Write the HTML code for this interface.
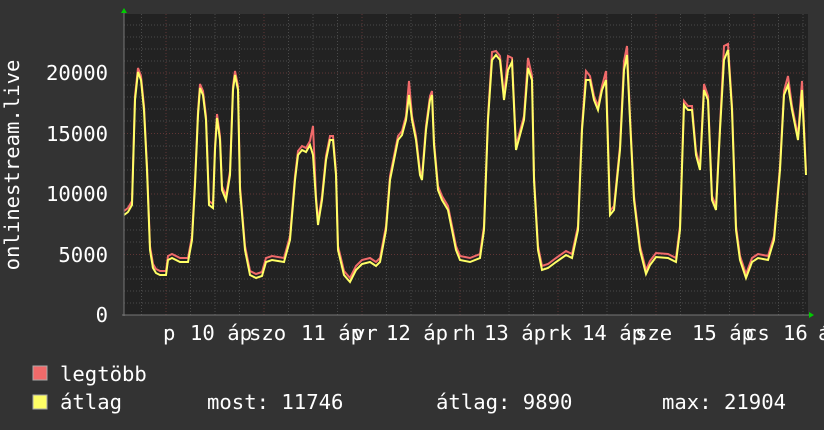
<!DOCTYPE html>
<html><head><meta charset="utf-8"><style>
body{margin:0;background:#333;}
svg{display:block;font-family:"DejaVu Sans Mono","Liberation Mono",monospace;}
</style></head><body>
<svg width="824" height="430" xmlns="http://www.w3.org/2000/svg">
<rect width="824" height="430" fill="#333"/>
<rect x="124" y="14" width="684" height="301" fill="#222"/>
<g stroke="#4a4a4a" stroke-width="1" stroke-dasharray="1,2">
<path d="M124 303H808M124 291H808M124 279H808M124 267H808M124 242H808M124 230H808M124 218H808M124 206H808M124 182H808M124 170H808M124 158H808M124 146H808M124 121H808M124 109H808M124 97H808M124 85H808M124 61H808M124 49H808M124 37H808M124 25H808"/>
<path d="M141.5 14V315M190.5 14V315M215 14V315M239.5 14V315M288.5 14V315M313 14V315M337.5 14V315M386.5 14V315M411 14V315M435.5 14V315M484.5 14V315M509 14V315M533.5 14V315M582.5 14V315M607 14V315M631.5 14V315M680.5 14V315M705 14V315M729.5 14V315M778.5 14V315M803 14V315"/>
</g>
<g stroke="#603535" stroke-width="1" stroke-dasharray="1,2">
<path d="M124 254.5H808M124 194H808M124 133.5H808M124 73H808"/>
<path d="M166 14V315M264 14V315M362 14V315M460 14V315M558 14V315M656 14V315M754 14V315"/>
</g>
<polyline fill="none" stroke="#f06a6a" stroke-width="2" transform="translate(0,-4)" points="124,215 128,212 132,205 135,100 138,72 141,80 144,110 147,170 150,250 153,268 156,273 160,275 166,275 168,260 172,258 180,262 188,262 192,240 195,185 198,115 200,88 203,95 206,120 209,205 213,208 215,150 217,118 220,140 222,190 226,200 230,175 233,90 235,75 238,90 240,190 245,250 250,275 256,278 262,276 266,262 272,260 284,262 290,240 295,180 298,155 302,150 306,152 310,145 313,130 316,200 318,225 322,200 326,160 330,140 333,140 336,175 338,250 344,275 350,282 356,270 362,264 370,262 376,266 380,262 386,230 390,180 394,160 398,140 402,135 406,120 409,85 412,120 416,140 420,175 422,180 426,130 430,100 432,95 434,145 438,190 442,200 448,210 452,230 456,250 460,260 470,262 480,258 484,230 488,120 492,56 496,55 500,60 504,100 508,60 512,62 516,150 520,135 524,120 528,62 532,80 534,180 538,250 542,270 548,268 556,262 566,255 572,258 578,230 582,130 586,75 590,80 594,100 598,110 602,90 606,75 610,215 614,210 620,150 624,65 627,50 630,120 634,200 640,250 646,274 650,265 656,257 668,258 676,262 680,230 684,105 688,110 692,110 696,155 700,170 704,88 708,100 712,200 716,210 720,130 724,50 728,48 732,110 736,230 740,260 746,278 752,262 758,258 768,260 774,240 780,170 784,95 788,80 792,110 798,140 802,85 806,175"/>
<polyline fill="none" stroke="#ffff66" stroke-width="2" points="124,215 128,212 132,205 135,100 138,72 141,80 144,110 147,170 150,250 153,268 156,273 160,275 166,275 168,260 172,258 180,262 188,262 192,240 195,185 198,115 200,88 203,95 206,120 209,205 213,208 215,150 217,118 220,140 222,190 226,200 230,175 233,90 235,75 238,90 240,190 245,250 250,275 256,278 262,276 266,262 272,260 284,262 290,240 295,180 298,155 302,150 306,152 310,145 313,155 316,200 318,225 322,200 326,160 330,140 333,140 336,175 338,250 344,275 350,282 356,270 362,264 370,262 376,266 380,262 386,230 390,180 394,160 398,140 402,135 406,120 409,95 412,120 416,140 420,175 422,180 426,130 430,100 432,95 434,145 438,190 442,200 448,210 452,230 456,250 460,260 470,262 480,258 484,230 488,120 492,60 496,55 500,60 504,100 508,70 512,62 516,150 520,135 524,120 528,68 532,80 534,180 538,250 542,270 548,268 556,262 566,255 572,258 578,230 582,130 586,80 590,80 594,100 598,110 602,90 606,80 610,215 614,210 620,150 624,70 627,55 630,120 634,200 640,250 646,274 650,265 656,257 668,258 676,262 680,230 684,105 688,110 692,110 696,155 700,170 704,90 708,100 712,200 716,210 720,130 724,60 728,50 732,110 736,230 740,260 746,278 752,262 758,258 768,260 774,240 780,170 784,95 788,85 792,110 798,140 802,90 806,175"/>
<path d="M124 12V316M122 315H810" stroke="#777" stroke-width="1"/>
<path d="M121 13L124 8L127 13Z" fill="#0c0"/>
<path d="M809 312L814 315L809 318Z" fill="#0c0"/>
<g fill="#fff" font-size="20.6" text-anchor="end">
<text x="108" y="80">20000</text>
<text x="108" y="141">15000</text>
<text x="108" y="201">10000</text>
<text x="108" y="262">5000</text>
<text x="108" y="322">0</text>
</g>
<text transform="translate(19,165) rotate(-90)" fill="#fff" font-size="20.6" text-anchor="middle">onlinestream.live</text>
<g fill="#fff" font-size="20.6">
<text x="163" y="340">p</text>
<text x="190" y="340">10 áp</text>
<text x="249" y="340">szo</text>
<text x="301" y="340">11 áp</text>
<text x="353" y="340">vr</text>
<text x="386" y="340">12 áp</text>
<text x="451" y="340">rh</text>
<text x="484" y="340">13 áp</text>
<text x="547" y="340">rk</text>
<text x="582" y="340">14 áp</text>
<text x="635" y="340">sze</text>
<text x="692" y="340">15 áp</text>
<text x="745" y="340">cs</text>
<text x="783" y="340">16</text>
<text x="818" y="340">á</text>
</g>
<rect x="33" y="366" width="14" height="14" fill="#f06a6a" stroke="#aaa" stroke-width="1"/>
<rect x="33" y="395" width="14" height="14" fill="#ffff66" stroke="#aaa" stroke-width="1"/>
<g fill="#fff" font-size="20.6">
<text x="60" y="381">legtöbb</text>
<text x="60" y="409">átlag</text>
<text x="207" y="409">most: 11746</text>
<text x="436" y="409">átlag: 9890</text>
<text x="662" y="409">max: 21904</text>
</g>
</svg>
</body></html>
